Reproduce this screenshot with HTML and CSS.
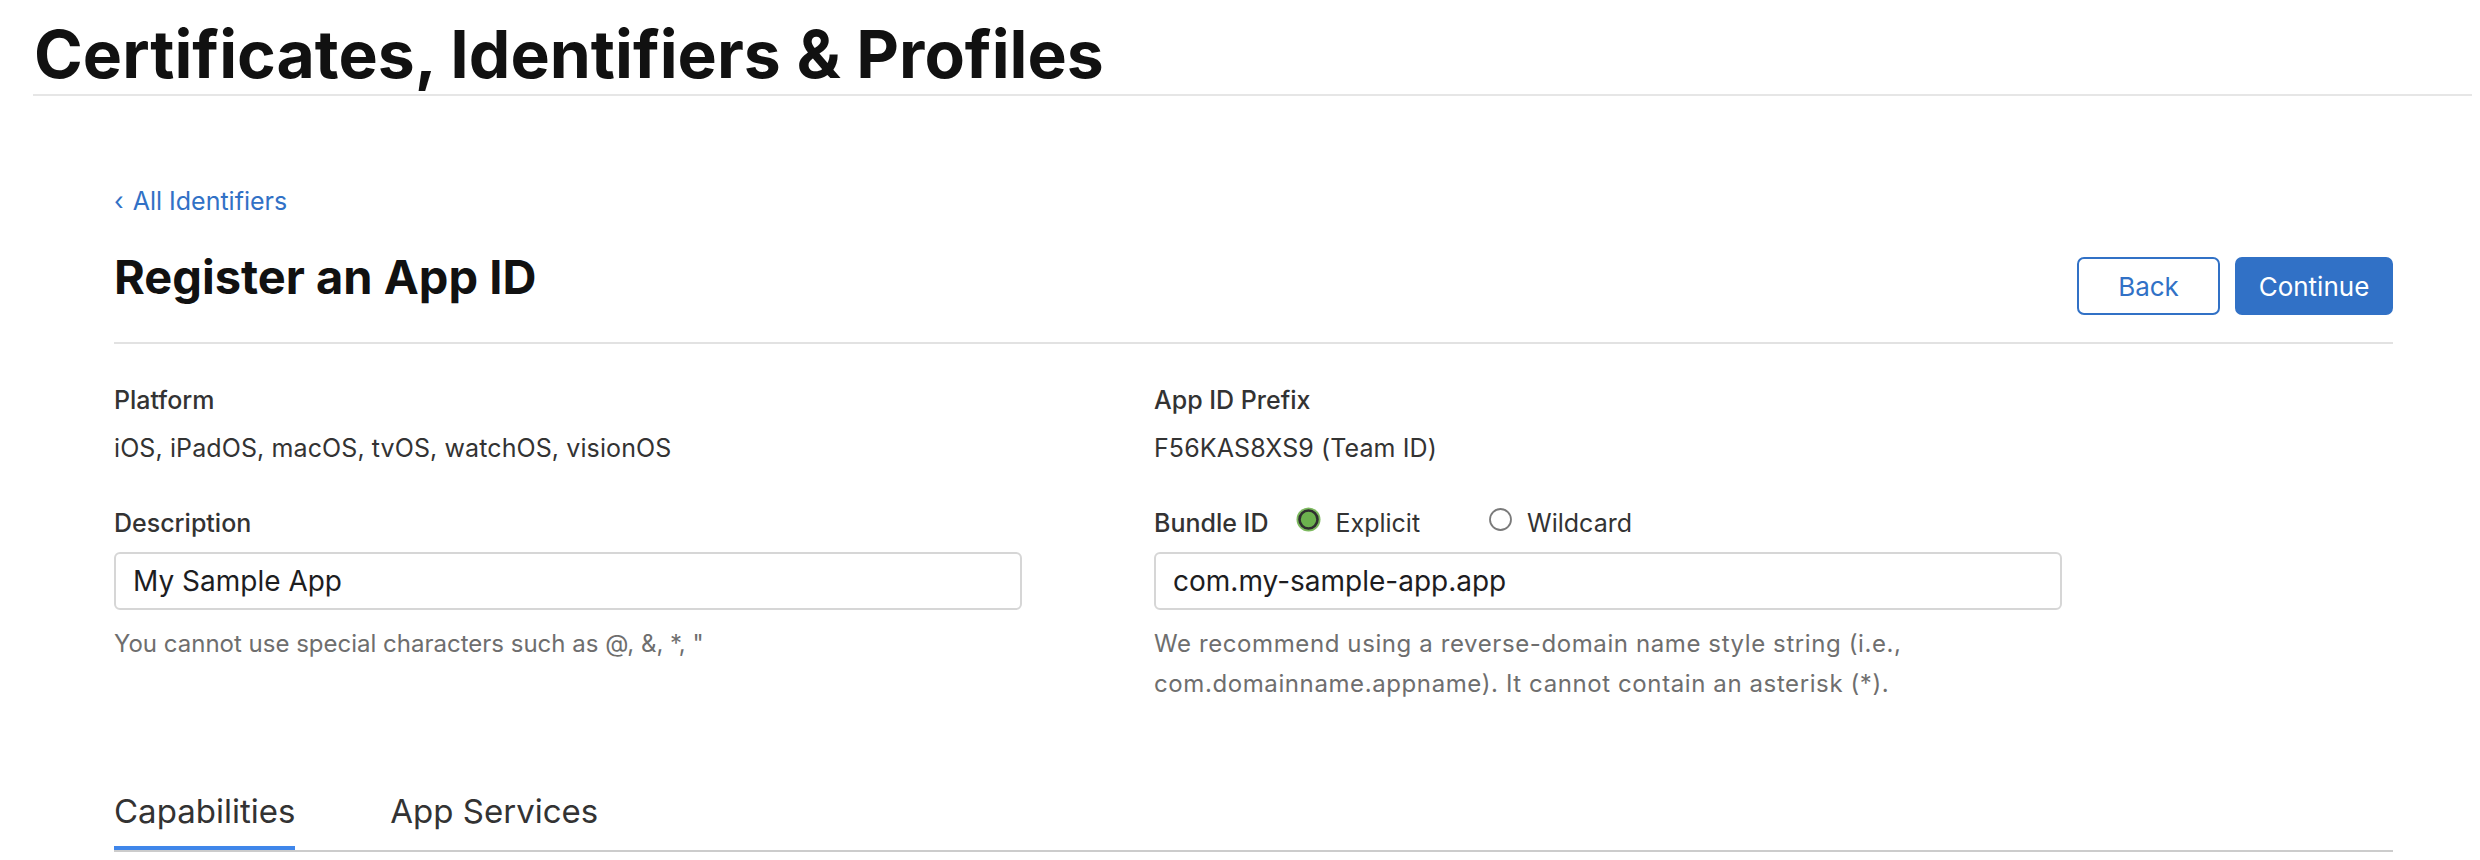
FILE: index.html
```html
<!DOCTYPE html>
<html lang="en">
<head>
<meta charset="utf-8">
<title>Register an App ID</title>
<link rel="stylesheet" href="styles.css">
</head>
<body>
<header class="page-header">
  <h1 class="page-title">Certificates, Identifiers &amp; Profiles</h1>
</header>
<main class="content">
  <a class="back-link" href="#"><span class="chev">‹</span> All Identifiers</a>
  <div class="title-row">
    <h2 class="section-title">Register an App ID</h2>
    <div class="actions">
      <button class="btn btn-back" type="button">Back</button>
      <button class="btn btn-continue" type="button">Continue</button>
    </div>
  </div>
  <div class="form-grid">
    <div class="field">
      <div class="label">Platform</div>
      <div class="value">iOS, iPadOS, macOS, tvOS, watchOS, visionOS</div>
    </div>
    <div class="field">
      <div class="label">App ID Prefix</div>
      <div class="value">F56KAS8XS9 (Team ID)</div>
    </div>
    <div class="field">
      <div class="label">Description</div>
      <div class="input">My Sample App</div>
      <div class="hint">You cannot use special characters such as @, &amp;, *, &quot;</div>
    </div>
    <div class="field">
      <div class="label-row">
        <span class="label">Bundle ID</span>
        <span class="radio">
          <svg class="radio-icon" width="25" height="25" viewBox="0 0 25 25"><circle cx="12.5" cy="12.5" r="12" fill="#7dba5f"/><circle cx="12.5" cy="12.5" r="9" fill="#6cb14e" stroke="#2f2f2f" stroke-width="2.6"/></svg>
          <span class="radio-text">Explicit</span>
        </span>
        <span class="radio">
          <svg class="radio-icon" width="25" height="25" viewBox="0 0 25 25"><circle cx="12.5" cy="12.5" r="10.5" fill="#fff" stroke="#7a7a7a" stroke-width="1.8"/></svg>
          <span class="radio-text">Wildcard</span>
        </span>
      </div>
      <div class="input">com.my-sample-app.app</div>
      <div class="hint hint-wide">We recommend using a reverse-domain name style string (i.e., com.domainname.appname). It cannot contain an asterisk (*).</div>
    </div>
  </div>
  <nav class="tabs">
    <span class="tab tab-active">Capabilities</span>
    <span class="tab">App Services</span>
  </nav>
</main>
</body>
</html>
```
FILE: styles.css
```css
* { box-sizing: border-box; }

html, body {
  margin: 0;
  padding: 0;
  background: #ffffff;
  font-family: Inter, "Noto Sans", "Liberation Sans", sans-serif;
  color: #333333;
}

.page-header {
  margin: 0 8px 0 33px;
  padding-top: 21px;
  padding-bottom: 7px;
  border-bottom: 2px solid #e6e6e6;
}

.page-title {
  margin: 0;
  padding-left: 1px;
  font-size: 66px;
  line-height: 66px;
  font-weight: 700;
  letter-spacing: 0;
  color: #111111;
}

.content {
  margin: 0 87px 0 114px;
}

.back-link {
  display: block;
  margin-top: 90px;
  font-size: 25px;
  line-height: 30px;
  color: #3171c6;
  text-decoration: none;
}

.chev {
  margin-right: 2px;
}

.title-row {
  display: flex;
  justify-content: space-between;
  align-items: flex-start;
  margin-top: 34px;
  padding-bottom: 27px;
  border-bottom: 2px solid #e2e2e2;
}

.section-title {
  margin: 0;
  font-size: 47px;
  line-height: 54px;
  font-weight: 700;
  color: #111111;
}

.actions {
  display: flex;
  gap: 15px;
  margin-top: 7px;
}

.btn {
  height: 58px;
  border-radius: 7px;
  font-family: Inter, "Noto Sans", sans-serif;
  font-size: 26px;
  border: 2px solid #3171c6;
  padding: 0;
}

.btn-back {
  width: 143px;
  background: #ffffff;
  color: #3171c6;
}

.btn-continue {
  width: 158px;
  background: #3171c6;
  color: #ffffff;
}

.form-grid {
  display: grid;
  grid-template-columns: 1040px 1fr;
  row-gap: 45px;
  margin-top: 41px;
}

.field {
  display: flex;
  flex-direction: column;
}

.label {
  font-size: 25px;
  line-height: 30px;
  font-weight: 500;
  color: #333333;
}

.value {
  margin-top: 18px;
  font-size: 25px;
  line-height: 30px;
  letter-spacing: 0.1px;
  color: #333333;
}

.label-row {
  display: flex;
  align-items: center;
  height: 30px;
}

.radio {
  display: flex;
  align-items: center;
  gap: 14px;
}

.label-row .label {
  margin-right: 28px;
}

.radio + .radio {
  margin-left: 68px;
}

.radio-icon {
  display: block;
  margin-top: -7px;
}

.radio-text {
  font-size: 25px;
  line-height: 30px;
  color: #333333;
}

.input {
  width: 908px;
  height: 58px;
  margin-top: 14px;
  padding: 0 17px;
  border: 2px solid #d6d6d6;
  border-radius: 6px;
  font-size: 28px;
  line-height: 54px;
  color: #1d1d1f;
}

.hint {
  width: 908px;
  margin-top: 14px;
  font-size: 24px;
  line-height: 40px;
  color: #6e6e6e;
}

.hint-wide {
  letter-spacing: 0.6px;
}

.tabs {
  display: flex;
  gap: 95px;
  margin-top: 87px;
  border-bottom: 2px solid #cccccc;
}

.tab {
  font-size: 33px;
  line-height: 40px;
  padding-bottom: 15px;
  border-bottom: 4px solid transparent;
  color: #333333;
}

.tab-active {
  border-bottom-color: #3f86ea;
}
```
